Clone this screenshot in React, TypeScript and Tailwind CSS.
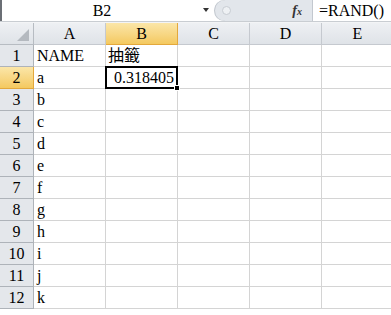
const COLS = ['A', 'B', 'C', 'D', 'E']
const ROWS: [string, string][] = [
  ['NAME', '抽籤'],
  ['a', '0.318405'],
  ['b', ''],
  ['c', ''],
  ['d', ''],
  ['e', ''],
  ['f', ''],
  ['g', ''],
  ['h', ''],
  ['i', ''],
  ['j', ''],
  ['k', ''],
]

const font = "font-['Liberation_Serif','Noto_Sans_CJK_TC',serif]"

function FormulaBar() {
  return (
    <div className="flex h-[21px] border-l-2 border-[#6b6f75] bg-white">
      {/* Name box */}
      <div className="relative flex w-[212px] items-center justify-center text-[16px] text-black">
        <span className="-ml-[12px]">B2</span>
        <span className="absolute right-[5px] top-[8px] h-0 w-0 border-x-[3px] border-t-[4px] border-x-transparent border-t-[#333]" />
      </div>
      {/* Buttons */}
      <div className="flex w-[98px] items-center rounded-l-full bg-[#e2e6eb] pl-[8px] shadow-[inset_1px_0_0_#c3c8cf]">
        <span className="h-[9px] w-[9px] rounded-full border border-[#c7ccd2] bg-[#eef1f4]" />
        <span className="ml-auto mr-[10px] text-[14px] italic font-bold leading-none text-[#333]">
          f<span className="text-[10px]">x</span>
        </span>
      </div>
      {/* Formula input */}
      <div className="flex flex-1 items-center border-l border-[#c3c8cf] pl-[6px] text-[16px] text-black">
        =RAND()
      </div>
    </div>
  )
}

function HeaderRow() {
  return (
    <div className="flex h-[24px] border-t border-[#c9cdd2] bg-[#f3f4f6] pt-[1px]">
      <div className="relative h-[22px] w-[34px] shrink-0 border-r border-b border-[#b7bcc2] bg-gradient-to-b from-[#eef0f3] to-[#dfe3e8]">
        <span className="absolute bottom-[3px] right-[4px] h-0 w-0 border-l-[12px] border-b-[12px] border-l-transparent border-b-[#b4b9bf]" />
      </div>
      {COLS.map((c) => (
        <div
          key={c}
          className={
            c === 'B'
              ? 'flex h-[22px] w-[72px] shrink-0 items-center justify-center border-r border-b border-[#e3a83c] bg-gradient-to-b from-[#fbe6a8] to-[#f4c95f] text-[16px]'
              : 'flex h-[22px] w-[72px] shrink-0 items-center justify-center border-r border-b border-[#c5c9cf] bg-gradient-to-b from-[#eef0f3] to-[#dfe3e8] text-[16px]'
          }
        >
          {c}
        </div>
      ))}
    </div>
  )
}

function Row({ n, a, b }: { n: number; a: string; b: string }) {
  const sel = n === 2
  return (
    <div className="flex h-[22px]">
      <div
        className={
          sel
            ? 'flex w-[34px] shrink-0 items-end justify-center border-r border-b border-[#e3a83c] bg-gradient-to-b from-[#fbe6a8] to-[#f4c95f] text-[16px] leading-[20px]'
            : 'flex w-[34px] shrink-0 items-end justify-center border-r border-b border-[#aeb3b9] bg-[#e4e7eb] text-[16px] leading-[20px]'
        }
      >
        {n}
      </div>
      <div className="flex w-[72px] shrink-0 items-end border-r border-b border-[#d4d4d4] pl-[3px] text-[16px] leading-[20px]">
        {a}
      </div>
      <div
        className={
          sel
            ? 'relative flex w-[72px] shrink-0 items-end justify-end border-r border-b border-[#d4d4d4] pr-[3px] text-[16px] leading-[20px]'
            : 'flex w-[72px] shrink-0 items-end border-r border-b border-[#d4d4d4] pl-[2px] text-[16px] leading-[20px]'
        }
      >
        {b}
        {sel && (
          <>
            <span className="pointer-events-none absolute -left-[1px] -top-[1px] -right-[1px] -bottom-[1px] border-2 border-black" />
            <span className="absolute -bottom-[3px] -right-[3px] h-[6px] w-[6px] border border-white bg-black" />
          </>
        )}
      </div>
      <div className="w-[72px] shrink-0 border-r border-b border-[#d4d4d4]" />
      <div className="w-[72px] shrink-0 border-r border-b border-[#d4d4d4]" />
      <div className="w-[72px] shrink-0 border-r border-b border-[#d4d4d4]" />
    </div>
  )
}

export default function App() {
  return (
    <div className={`h-[315px] w-[391px] overflow-hidden bg-white text-black ${font}`}>
      <FormulaBar />
      <HeaderRow />
      {ROWS.map(([a, b], i) => (
        <Row key={i} n={i + 1} a={a} b={b} />
      ))}
    </div>
  )
}
